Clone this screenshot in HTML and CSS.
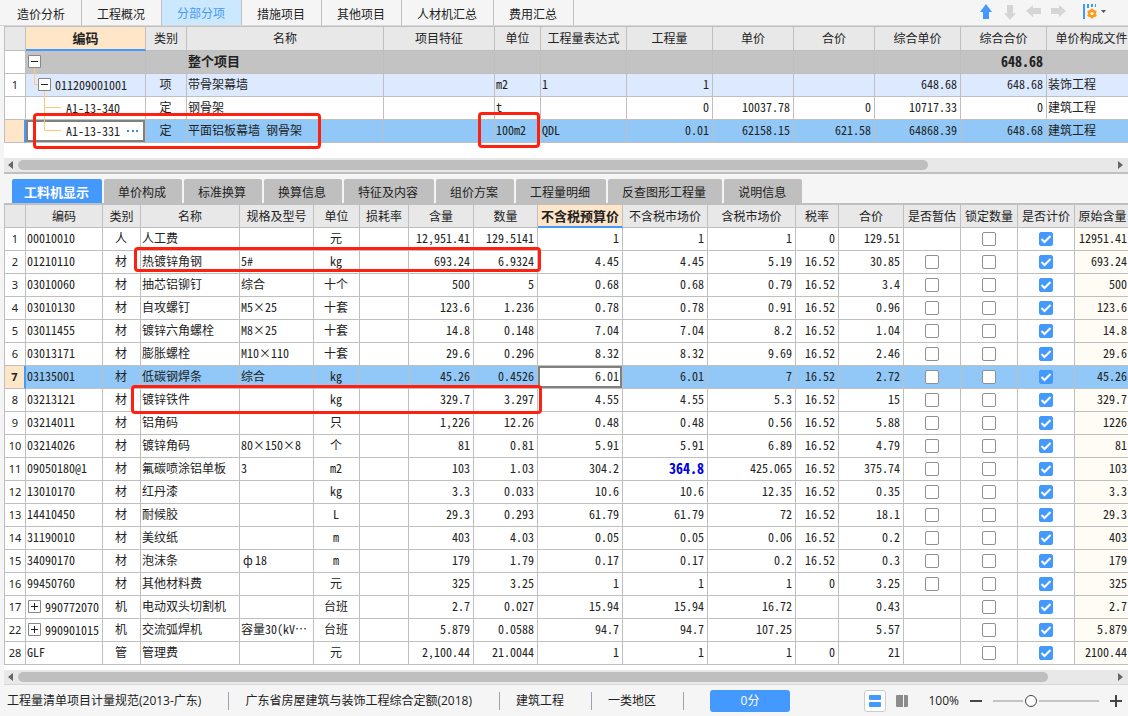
FILE: index.html
```html
<!DOCTYPE html>
<html lang="zh-CN">
<head>
<meta charset="utf-8">
<title>分部分项</title>
<link rel="stylesheet" href="styles.css">
</head>
<body>
<div class="app">
  <header class="topbar">
    <nav class="main-tabs">
      <button>造价分析</button><button>工程概况</button><button class="active">分部分项</button><button>措施项目</button><button>其他项目</button><button>人材机汇总</button><button>费用汇总</button>
    </nav>
    <div class="tools">
      <button aria-label="上移"><svg width="16" height="16"><path fill="#4499ff" d="M8 0 14 8H11V15H5V8H2Z"/></svg></button>
      <button aria-label="下移"><svg width="16" height="16"><path fill="#d5d5d5" d="M8 16 2 9H5V1H11V9H14Z"/></svg></button>
      <button aria-label="左移"><svg width="16" height="16"><path fill="#d5d5d5" d="M0 7 7 1V4H15V10H7V13Z"/></svg></button>
      <button aria-label="右移"><svg width="16" height="16"><path fill="#d5d5d5" d="M16 7 9 1V4H1V10H9V13Z"/></svg></button>
      <button class="settings" aria-label="列设置"><svg width="24" height="16"><path fill="#4499ff" d="M0 0h2v15H0zM4 0h2v4H4zM8 0h2v3H8zM12 0h1v3h-1z"/><g fill="#ff9c1a"><circle cx="9" cy="9.500" r="3.800"/><circle cx="9" cy="6" r="1.600"/><circle cx="9" cy="13" r="1.600"/><circle cx="6" cy="7.800" r="1.600"/><circle cx="12" cy="7.800" r="1.600"/><circle cx="6" cy="11.300" r="1.600"/><circle cx="12" cy="11.300" r="1.600"/></g><circle cx="9" cy="9.500" r="1.500" fill="#fff"/><path fill="#555" d="M18 6h5l-2.500 3z"/></svg></button>
    </div>
  </header>

  <section class="panel upper">
    <table class="grid items">
      <colgroup><col class="w21"><col class="w120"><col class="w41"><col class="w197"><col class="w111"><col class="w46"><col class="w86"><col class="w86"><col class="w81"><col class="w81"><col class="w86"><col class="w86"><col class="w90"></colgroup>
      <thead><tr><th><th class="current">编码<th>类别<th>名称<th>项目特征<th>单位<th>工程量表达式<th>工程量<th>单价<th>合价<th>综合单价<th>综合合价<th>单价构成文件</tr></thead>
      <tbody>
        <tr class="total"><td><td class="tree"><div class="node"><svg class="lines" width="30" height="22"><path class="branch" d="M8.500 17V24"/><path class="box" d="M2.500 4.500h12v12h-12z"/><path class="sign" d="M5 10.500h7"/></svg></div><td><td>整个项目<td><td><td><td><td><td><td><td>648.68<td></tr>
        <tr class="group"><td>1<td class="tree"><div class="node"><svg class="lines" width="29" height="22"><path class="branch" d="M8.500 -1V10.500H12M18.500 17V24"/><path class="box" d="M12.500 4.500h12v12h-12z"/><path class="sign" d="M15 10.500h7"/></svg>011209001001</div><td>项<td>带骨架幕墙<td><td>m2<td>1<td>1<td><td><td>648.68<td>648.68<td>装饰工程</tr>
        <tr><td><td class="tree"><div class="node"><svg class="lines" width="40" height="22"><path class="branch" d="M18.500 -1V24M18.500 10.500H35"/></svg>A1-13-340</div><td>定<td>钢骨架<td><td>t<td><td>0<td>10037.78<td>0<td>10717.33<td>0<td>建筑工程</tr>
        <tr class="selected"><td><td class="tree editing"><div class="node"><svg class="lines" width="40" height="22"><path class="branch" d="M18.500 -1V10.500H35"/></svg>A1-13-331<button class="more" aria-label="更多"><svg width="12" height="4"><path fill="#3f8fd0" d="M0 1h2v2H0zM5 1h2v2H5zM9 1h2v2H9z"/></svg></button></div><td>定<td>平面铝板幕墙 钢骨架<td><td>100m2<td>QDL<td>0.01<td>62158.15<td>621.58<td>64868.39<td>648.68<td>建筑工程</tr>
      </tbody>
    </table>
    <div class="scrollbar"><svg width="6" height="8"><path d="M5 0v8L0 4z"/></svg><div class="track"><div class="thumb thumb-upper"></div></div><svg width="6" height="8"><path d="M0 0v8l5-4z"/></svg></div>
  </section>

  <nav class="detail-tabs">
    <button class="active">工料机显示</button><button>单价构成</button><button>标准换算</button><button>换算信息</button><button>特征及内容</button><button>组价方案</button><button>工程量明细</button><button>反查图形工程量</button><button>说明信息</button>
  </nav>

  <section class="panel lower">
    <table class="grid detail">
      <colgroup><col class="w21"><col class="w77"><col class="w38"><col class="w99"><col class="w74"><col class="w46"><col class="w49"><col class="w65"><col class="w64"><col class="w85"><col class="w85"><col class="w88"><col class="w43"><col class="w65"><col class="w57"><col class="w57"><col class="w57"><col class="w56"></colgroup>
      <thead><tr><th><th>编码<th>类别<th>名称<th>规格及型号<th>单位<th>损耗率<th>含量<th>数量<th class="current">不含税预算价<th>不含税市场价<th>含税市场价<th>税率<th>合价<th>是否暂估<th>锁定数量<th>是否计价<th>原始含量</tr></thead>
      <tbody>
        <tr><td>1<td>00010010<td>人<td>人工费<td><td>元<td><td>12,951.41<td>129.5141<td>1<td>1<td>1<td>0<td>129.51<td><td><input type="checkbox" aria-label="锁定数量"><td><input type="checkbox" checked aria-label="是否计价"><td>12951.41</tr>
        <tr><td>2<td>01210110<td>材<td>热镀锌角钢<td>5#<td>kg<td><td>693.24<td>6.9324<td>4.45<td>4.45<td>5.19<td>16.52<td>30.85<td><input type="checkbox" aria-label="是否暂估"><td><input type="checkbox" aria-label="锁定数量"><td><input type="checkbox" checked aria-label="是否计价"><td>693.24</tr>
        <tr><td>3<td>03010060<td>材<td>抽芯铝铆钉<td>综合<td>十个<td><td>500<td>5<td>0.68<td>0.68<td>0.79<td>16.52<td>3.4<td><input type="checkbox" aria-label="是否暂估"><td><input type="checkbox" aria-label="锁定数量"><td><input type="checkbox" checked aria-label="是否计价"><td>500</tr>
        <tr><td>4<td>03010130<td>材<td>自攻螺钉<td>M5×25<td>十套<td><td>123.6<td>1.236<td>0.78<td>0.78<td>0.91<td>16.52<td>0.96<td><input type="checkbox" aria-label="是否暂估"><td><input type="checkbox" aria-label="锁定数量"><td><input type="checkbox" checked aria-label="是否计价"><td>123.6</tr>
        <tr><td>5<td>03011455<td>材<td>镀锌六角螺栓<td>M8×25<td>十套<td><td>14.8<td>0.148<td>7.04<td>7.04<td>8.2<td>16.52<td>1.04<td><input type="checkbox" aria-label="是否暂估"><td><input type="checkbox" aria-label="锁定数量"><td><input type="checkbox" checked aria-label="是否计价"><td>14.8</tr>
        <tr><td>6<td>03013171<td>材<td>膨胀螺栓<td>M10×110<td>十套<td><td>29.6<td>0.296<td>8.32<td>8.32<td>9.69<td>16.52<td>2.46<td><input type="checkbox" aria-label="是否暂估"><td><input type="checkbox" aria-label="锁定数量"><td><input type="checkbox" checked aria-label="是否计价"><td>29.6</tr>
        <tr class="selected"><td>7<td>03135001<td>材<td>低碳钢焊条<td>综合<td>kg<td><td>45.26<td>0.4526<td class="editing">6.01<td>6.01<td>7<td>16.52<td>2.72<td><input type="checkbox" aria-label="是否暂估"><td><input type="checkbox" aria-label="锁定数量"><td><input type="checkbox" checked aria-label="是否计价"><td>45.26</tr>
        <tr><td>8<td>03213121<td>材<td>镀锌铁件<td><td>kg<td><td>329.7<td>3.297<td>4.55<td>4.55<td>5.3<td>16.52<td>15<td><input type="checkbox" aria-label="是否暂估"><td><input type="checkbox" aria-label="锁定数量"><td><input type="checkbox" checked aria-label="是否计价"><td>329.7</tr>
        <tr><td>9<td>03214011<td>材<td>铝角码<td><td>只<td><td>1,226<td>12.26<td>0.48<td>0.48<td>0.56<td>16.52<td>5.88<td><input type="checkbox" aria-label="是否暂估"><td><input type="checkbox" aria-label="锁定数量"><td><input type="checkbox" checked aria-label="是否计价"><td>1226</tr>
        <tr><td>10<td>03214026<td>材<td>镀锌角码<td>80×150×8<td>个<td><td>81<td>0.81<td>5.91<td>5.91<td>6.89<td>16.52<td>4.79<td><input type="checkbox" aria-label="是否暂估"><td><input type="checkbox" aria-label="锁定数量"><td><input type="checkbox" checked aria-label="是否计价"><td>81</tr>
        <tr><td>11<td>09050180@1<td>材<td>氟碳喷涂铝单板<td>3<td>m2<td><td>103<td>1.03<td>304.2<td class="changed">364.8<td>425.065<td>16.52<td>375.74<td><input type="checkbox" aria-label="是否暂估"><td><input type="checkbox" aria-label="锁定数量"><td><input type="checkbox" checked aria-label="是否计价"><td>103</tr>
        <tr><td>12<td>13010170<td>材<td>红丹漆<td><td>kg<td><td>3.3<td>0.033<td>10.6<td>10.6<td>12.35<td>16.52<td>0.35<td><input type="checkbox" aria-label="是否暂估"><td><input type="checkbox" aria-label="锁定数量"><td><input type="checkbox" checked aria-label="是否计价"><td>3.3</tr>
        <tr><td>13<td>14410450<td>材<td>耐候胶<td><td>L<td><td>29.3<td>0.293<td>61.79<td>61.79<td>72<td>16.52<td>18.1<td><input type="checkbox" aria-label="是否暂估"><td><input type="checkbox" aria-label="锁定数量"><td><input type="checkbox" checked aria-label="是否计价"><td>29.3</tr>
        <tr><td>14<td>31190010<td>材<td>美纹纸<td><td>m<td><td>403<td>4.03<td>0.05<td>0.05<td>0.06<td>16.52<td>0.2<td><input type="checkbox" aria-label="是否暂估"><td><input type="checkbox" aria-label="锁定数量"><td><input type="checkbox" checked aria-label="是否计价"><td>403</tr>
        <tr><td>15<td>34090170<td>材<td>泡沫条<td><span class="wide">ф</span>18<td>m<td><td>179<td>1.79<td>0.17<td>0.17<td>0.2<td>16.52<td>0.3<td><input type="checkbox" aria-label="是否暂估"><td><input type="checkbox" aria-label="锁定数量"><td><input type="checkbox" checked aria-label="是否计价"><td>179</tr>
        <tr><td>16<td>99450760<td>材<td>其他材料费<td><td>元<td><td>325<td>3.25<td>1<td>1<td>1<td>0<td>3.25<td><input type="checkbox" aria-label="是否暂估"><td><input type="checkbox" aria-label="锁定数量"><td><input type="checkbox" checked aria-label="是否计价"><td>325</tr>
        <tr><td>17<td class="tree"><div class="node"><svg class="lines" width="19" height="22"><path class="box" d="M2.500 4.500h12v12h-12z"/><path class="sign" d="M5 10.500h7M8.500 7v7"/></svg>990772070</div><td>机<td>电动双头切割机<td><td>台班<td><td>2.7<td>0.027<td>15.94<td>15.94<td>16.72<td><td>0.43<td><td><input type="checkbox" aria-label="锁定数量"><td><input type="checkbox" checked aria-label="是否计价"><td>2.7</tr>
        <tr><td>22<td class="tree"><div class="node"><svg class="lines" width="19" height="22"><path class="box" d="M2.500 4.500h12v12h-12z"/><path class="sign" d="M5 10.500h7M8.500 7v7"/></svg>990901015</div><td>机<td>交流弧焊机<td>容量30(kV…<td>台班<td><td>5.879<td>0.0588<td>94.7<td>94.7<td>107.25<td><td>5.57<td><td><input type="checkbox" aria-label="锁定数量"><td><input type="checkbox" checked aria-label="是否计价"><td>5.879</tr>
        <tr><td>28<td>GLF<td>管<td>管理费<td><td>元<td><td>2,100.44<td>21.0044<td>1<td>1<td>1<td>0<td>21<td><td><input type="checkbox" aria-label="锁定数量"><td><input type="checkbox" checked aria-label="是否计价"><td>2100.44</tr>
      </tbody>
    </table>
    <div class="scrollbar"><svg width="6" height="8"><path d="M5 0v8L0 4z"/></svg><div class="track"><div class="thumb thumb-lower"></div></div><svg width="6" height="8"><path d="M0 0v8l5-4z"/></svg></div>
  </section>

  <footer class="status">
    <span>工程量清单项目计量规范(2013-广东)</span><span>广东省房屋建筑与装饰工程综合定额(2018)</span><span>建筑工程</span><span>一类地区</span>
    <button class="score">0分</button>
    <div class="view">
      <button class="mode on" aria-label="上下布局"><svg width="12" height="12"><rect width="12" height="5" rx="1" fill="#4499ff"/><rect y="7" width="12" height="5" rx="1" fill="#4499ff"/></svg></button>
      <button class="mode" aria-label="左右布局"><svg width="12" height="12"><path fill="#8c8c8c" d="M0 1q0-1 1-1h6v12H1q-1 0-1-1zM8 0h3q1 0 1 1v10q0 1-1 1H8z"/></svg></button>
      <label for="zoom">100%</label>
      <button class="step" aria-label="缩小"><svg width="12" height="12"><path fill="#444" d="M0 5h12v2H0z"/></svg></button>
      <input id="zoom" class="zoom" type="range" min="0" max="100" value="34">
      <button class="step" aria-label="放大"><svg width="12" height="12"><path fill="#444" d="M0 5h12v2H0zM5 0h2v12H5z"/></svg></button>
    </div>
  </footer>

  <div class="mark mark-item"></div>
  <div class="mark mark-unit"></div>
  <div class="mark mark-steel"></div>
  <div class="mark mark-iron"></div>
</div>
</body>
</html>
```
FILE: styles.css
```css
* { box-sizing: border-box; }
body {
  margin: 0;
  background: #f5f5f5;
  color: #222;
  font: 12px/18px "Noto Sans CJK SC", sans-serif;
}
button {
  margin: 0;
  padding: 0;
  border: 0;
  background: none;
  color: inherit;
  font: inherit;
}
svg { display: block; flex: none; }

.app {
  position: relative;
  display: flex;
  flex-direction: column;
  min-height: 100vh;
  overflow: hidden;
}

/* top tabs */
.topbar {
  display: flex;
  justify-content: space-between;
  height: 26px;
  padding-left: 2px;
  border-bottom: 1px solid #d8d8d8;
}
.main-tabs { display: flex; }
.main-tabs button {
  padding: 2px 16px 0 15px;
  border-right: 1px solid #c0c0c0;
}
.main-tabs .active { background: #cce8ff; color: #4499ff; padding-top: 0; }
.tools {
  display: flex;
  align-items: center;
  gap: 8px;
  padding: 0 21px 2px 0;
}
.settings { margin-left: 9px; }

/* grids */
.panel {
  margin-left: 4px;
  border-top: 1px solid #bfbfbf;
  background: #fff;
  overflow: hidden;
}
.grid {
  table-layout: fixed;
  width: 0;
  border-collapse: separate;
  border-spacing: 0;
  border-left: 1px solid #bfbfbf;
  font-family: "Noto Sans Mono CJK SC", "Noto Sans CJK SC", monospace;
  line-height: 18px;
}
.grid th, .grid td {
  height: 23px;
  padding: 0 3px 2px 1px;
  border-right: 1px solid #bfbfbf;
  border-bottom: 1px solid #bfbfbf;
  white-space: nowrap;
  overflow: hidden;
}
.grid th {
  padding: 0;
  background: #e8e8e8;
  font-weight: 400;
  text-align: center;
}
.items th { height: 24px; padding-bottom: 1px; }
.grid th.current {
  background: #ffe6c8;
  border-bottom: 2px solid #4499ff;
  font-size: 13px;
  font-weight: 700;
}
.grid td:first-child {
  padding: 0;
  text-align: center;
  font: 11px/18px "Noto Sans", sans-serif;
}
.grid td:nth-child(3) { text-align: center; padding: 0 1px 2px 0; }
.items td:nth-child(n+8):nth-child(-n+12),
.detail td:nth-child(n+8):nth-child(-n+14),
.detail td:nth-child(18) { text-align: right; }
.detail td:nth-child(6) { text-align: center; padding: 0 1px 2px 0; }
.detail td:nth-child(n+15):nth-child(-n+17) { text-align: center; padding: 0; }
.detail td:nth-child(18) { background: #fffbf5; }

.w21 { width: 21px; } .w38 { width: 38px; } .w41 { width: 41px; }
.w43 { width: 43px; } .w46 { width: 46px; } .w49 { width: 49px; }
.w56 { width: 56px; } .w57 { width: 57px; } .w64 { width: 64px; }
.w65 { width: 65px; } .w74 { width: 74px; } .w77 { width: 77px; }
.w81 { width: 81px; } .w85 { width: 85px; } .w86 { width: 86px; }
.w88 { width: 88px; } .w90 { width: 90px; } .w99 { width: 99px; }
.w111 { width: 111px; } .w120 { width: 120px; } .w197 { width: 197px; }

.grid .total td { background: #c3c3c3; font-weight: 700; }
.grid .total td:first-child { background: #fff; }
.grid .total td:nth-child(4) { font-size: 13px; }
.grid .total td:nth-child(12) { font-size: 14px; }
.grid .group td { background: #dce9ff; }
.grid .group td:first-child { background: #fff; }
.grid .selected td { background: #91c8f7; }
.grid .selected td:first-child {
  background: #ffe6c8;
  border-right: 2px solid #4499ff;
  font-weight: 700;
}
.grid .selected td.editing {
  background: #fff;
  box-shadow: inset 0 0 0 2px #808080;
}

.grid td.tree { padding: 0; overflow: visible; }
.node { display: flex; align-items: center; height: 22px; padding-bottom: 1px; }
.lines { overflow: visible; }
.branch { fill: none; stroke: #ffc97a; }
.box { fill: #fff; stroke: #888; }
.sign { fill: none; stroke: #222; }
.more { margin-left: 7px; }
.grid td.changed { color: #0000e0; font-size: 14px; font-weight: 700; }
.wide { display: inline-block; width: 14px; text-align: center; }

input[type="checkbox"] {
  appearance: none;
  display: block;
  width: 14px;
  height: 14px;
  margin: 0 auto;
  border: 1px solid #909090;
  border-radius: 2px;
  background: #fff;
}
input[type="checkbox"]:checked {
  border-color: #4499ff;
  background: #4499ff url("data:image/svg+xml,%3Csvg xmlns='http://www.w3.org/2000/svg' width='12' height='12'%3E%3Cpath d='M1.500 6 4.500 9 10.500 3' fill='none' stroke='white' stroke-width='2'/%3E%3C/svg%3E") center no-repeat;
}

/* scrollbars */
.scrollbar {
  display: flex;
  align-items: center;
  gap: 4px;
  height: 14px;
  padding: 0 4px;
  background: #e8e8e8;
  fill: #666;
}
.upper .scrollbar { margin-top: 15px; }
.lower .scrollbar { margin-top: 5px; }
.track { flex: 1; }
.thumb { height: 10px; border-radius: 5px; background: #bfbfbf; }
.thumb-upper { width: 83%; }
.thumb-lower { width: 94%; }
.upper { border-bottom: 2px solid #bfbfbf; }
.lower { border-top-width: 2px; border-bottom: 1px solid #d8d8d8; }

/* detail tabs */
.detail-tabs {
  display: flex;
  gap: 2px;
  padding: 5px 0 0 12px;
}
.detail-tabs button {
  height: 24px;
  padding: 1px 16px 0 14px;
  border-radius: 2px 2px 0 0;
  background: #bfbfbf;
}
.detail-tabs .active {
  padding: 1px 13px 0 12px;
  background: #4499ff;
  color: #fff;
  font-size: 13px;
  font-weight: 700;
}

/* status bar */
.status {
  display: flex;
  align-items: center;
  flex: 1;
  min-height: 31px;
  padding-left: 7px;
  font-family: "Open Sans", "Noto Sans CJK SC", sans-serif;
}
.status > span {
  white-space: nowrap;
  padding-right: 27px;
  margin-right: 16px;
  border-right: 1px solid #9aa3b0;
}
.score {
  width: 80px;
  height: 22px;
  margin-left: 10px;
  border-radius: 3px;
  background: #4499ff;
  color: #fff;
}
.view {
  display: flex;
  align-items: center;
  margin-left: auto;
  padding-right: 6px;
}
.mode {
  display: grid;
  place-items: center;
  width: 22px;
  height: 22px;
  margin-right: 5px;
  border: 1px solid transparent;
  border-radius: 3px;
}
.mode.on { background: #fff; border-color: #ccc; }
.view label { margin: 0 11px 0 10px; }
.zoom {
  appearance: none;
  width: 106px;
  height: 14px;
  margin: 0 11px;
  background: linear-gradient(#c4c4c4, #c4c4c4) center / 100% 2px no-repeat;
}
.zoom::-webkit-slider-thumb {
  appearance: none;
  width: 12px;
  height: 12px;
  border: 1px solid #444;
  border-radius: 50%;
  background: #fff;
  box-shadow: 0 0 0 2px #f5f5f5;
}

/* red annotation frames lying over the grids */
.mark {
  position: absolute;
  border: 3px solid #ff2010;
  border-radius: 4px;
  pointer-events: none;
}
.mark-item { left: 33px; top: 113px; width: 288px; height: 36px; }
.mark-unit { left: 478px; top: 112px; width: 62px; height: 36px; }
.mark-steel { left: 134px; top: 247px; width: 407px; height: 25px; }
.mark-iron { left: 131px; top: 385px; width: 411px; height: 29px; }
```
